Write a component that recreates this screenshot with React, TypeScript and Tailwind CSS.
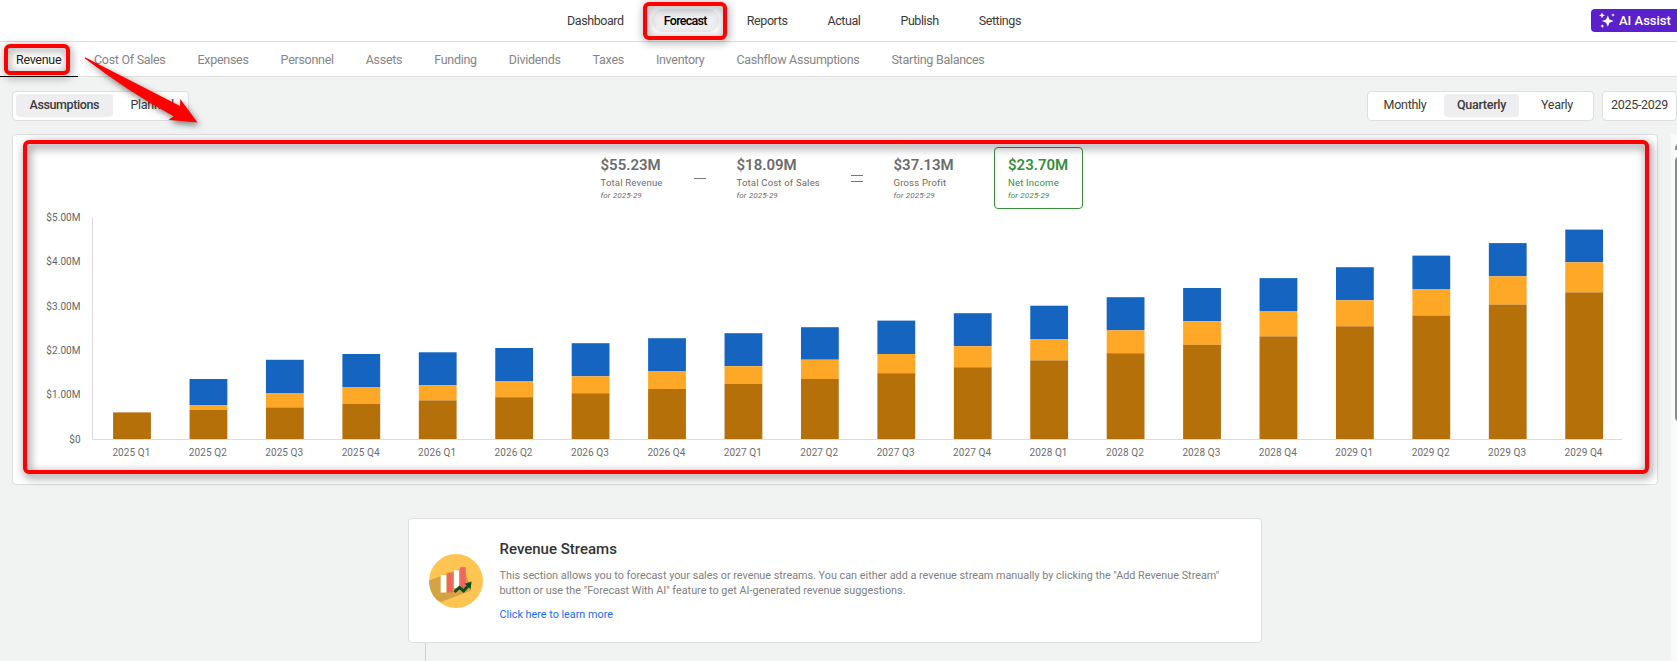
import React, { useState } from 'react';
import clsx from 'clsx';

const mainNav = ['Dashboard', 'Forecast', 'Reports', 'Actual', 'Publish', 'Settings'];

const subNav = [
  'Revenue',
  'Cost Of Sales',
  'Expenses',
  'Personnel',
  'Assets',
  'Funding',
  'Dividends',
  'Taxes',
  'Inventory',
  'Cashflow Assumptions',
  'Starting Balances',
];

interface Bar {
  label: string;
  total: number;
  mid: number;
  base: number;
}

// heights in chart units, measured up from the x axis
const bars: Bar[] = [
  { label: '2025 Q1', total: 26.6, mid: 26.6, base: 26.6 },
  { label: '2025 Q2', total: 60, mid: 33.6, base: 29.2 },
  { label: '2025 Q3', total: 79.2, mid: 46, base: 31.6 },
  { label: '2025 Q4', total: 85, mid: 52, base: 35 },
  { label: '2026 Q1', total: 86.7, mid: 53.6, base: 38.6 },
  { label: '2026 Q2', total: 91, mid: 58, base: 41.8 },
  { label: '2026 Q3', total: 95.8, mid: 62.7, base: 45.8 },
  { label: '2026 Q4', total: 100.8, mid: 68, base: 50 },
  { label: '2027 Q1', total: 105.8, mid: 72.8, base: 55 },
  { label: '2027 Q2', total: 111.8, mid: 79.3, base: 60 },
  { label: '2027 Q3', total: 118.4, mid: 85, base: 65.8 },
  { label: '2027 Q4', total: 125.8, mid: 92.8, base: 71.7 },
  { label: '2028 Q1', total: 133.3, mid: 100, base: 78.6 },
  { label: '2028 Q2', total: 141.8, mid: 108.7, base: 85.8 },
  { label: '2028 Q3', total: 151, mid: 117.8, base: 94.2 },
  { label: '2028 Q4', total: 160.9, mid: 128, base: 102.6 },
  { label: '2029 Q1', total: 171.8, mid: 138.7, base: 112.7 },
  { label: '2029 Q2', total: 183.4, mid: 150, base: 123.5 },
  { label: '2029 Q3', total: 195.9, mid: 162.7, base: 134.4 },
  { label: '2029 Q4', total: 209.4, mid: 176.7, base: 146.6 },
];

const yTicks = ['$0', '$1.00M', '$2.00M', '$3.00M', '$4.00M', '$5.00M'];

const BASELINE = 230;
const STEP = 76.43;

function RevenueChart() {
  return (
    <svg width="1644" height="275" viewBox="0 0 1644 275" className="block text-[10px] tracking-[0.08px]">
      {yTicks.map((tick, i) => (
        <text key={tick} x="67.6" y={BASELINE + 3.6 - i * 44.3} textAnchor="end" fill="#666">
          {tick}
        </text>
      ))}
      <path d="M79.5 8.5V230.5H1609" fill="none" stroke="#dcdcdc" />
      {bars.map((bar, i) => {
        const x = 100.1 + i * STEP;
        return (
          <g key={bar.label}>
            <rect x={x} y={BASELINE - bar.total} width="37.8" height={bar.total - bar.mid} fill="#1565c0" />
            <rect x={x} y={BASELINE - bar.mid} width="37.8" height={bar.mid - bar.base} fill="#ffa726" />
            <rect x={x} y={BASELINE - bar.base} width="37.8" height={bar.base} fill="#b57009" />
            <text x={x + 18.3} y="247" textAnchor="middle" fill="#6c6c6c">
              {bar.label}
            </text>
          </g>
        );
      })}
    </svg>
  );
}

function Metric({ value, label }: { value: string; label: string }) {
  return (
    <div>
      <p className="text-[15px] leading-[18px] font-semibold">{value}</p>
      <p className="text-[9.5px] leading-[12px] mt-[3px] tracking-[0.2px] whitespace-nowrap">{label}</p>
      <p className="text-[8px] leading-[10px] mt-[2px] italic tracking-[0.12px]">for 2025-29</p>
    </div>
  );
}

function SparkleIcon() {
  return (
    <svg width="16" height="17" viewBox="0 0 16 17" fill="#fff">
      <path d="M8.8 3.4 10.5 7.4 14.6 9.1 10.5 10.8 8.8 14.8 7.1 10.8 3 9.1 7.1 7.4Z" />
      <path d="M3 0.4 3.9 2.4 6 3.3 3.9 4.2 3 6.2 2.1 4.2 0.1 3.3 2.1 2.4Z" />
      <path d="M14 1.2 14.6 2.4 15.8 3 14.6 3.6 14 4.8 13.4 3.6 12.2 3 13.4 2.4Z" />
      <path d="M3.3 12.2 3.9 13.5 5.2 14.1 3.9 14.7 3.3 16 2.7 14.7 1.4 14.1 2.7 13.5Z" />
    </svg>
  );
}

function RevenueIcon() {
  return (
    <svg width="54" height="54" viewBox="0 0 54 54">
      <defs>
        <clipPath id="disc">
          <circle cx="27" cy="27" r="27" />
        </clipPath>
      </defs>
      <circle cx="27" cy="27" r="27" fill="#ffc552" />
      <path d="M0 26.5 35 13.3 42.5 36.5 12 48 0 42Z" fill="#d4a444" clipPath="url(#disc)" />
      <path d="M11.7 21H17.3V38.5H11.7ZM25 16.3H30V34H25Z" fill="#fff" />
      <path d="M18.2 18.8H23.7V38.5H18.2ZM31.2 13.3H36.7V34H31.2Z" fill="#f2645f" />
      <path d="M25.5 38 30.4 33.4 34.6 37 39.5 31.5" fill="none" stroke="#0b4f1d" strokeWidth="3" />
      <path d="M35.8 29.8 42.6 27.5 41.6 35Z" fill="#0b4f1d" />
    </svg>
  );
}

export default function App() {
  const [view, setView] = useState('Assumptions');
  const [period, setPeriod] = useState('Quarterly');

  return (
    <div className="relative h-[661px] overflow-hidden bg-[#f1f3f3] font-['Roboto',sans-serif] text-[12.5px] tracking-[-0.29px] text-[#3a3a3a]">
      <header className="flex h-[42px] items-center border-b border-[#dedede] bg-white pl-[547px]">
        {mainNav.map((item) => (
          <a
            key={item}
            className={clsx(
              'mx-2 flex h-[23px] items-center rounded-full px-3 pt-px',
              item === 'Forecast' ? 'bg-[#eeeef0] font-medium text-black tracking-[-0.7px]' : 'tracking-[-0.42px]'
            )}
          >
            {item}
          </a>
        ))}
        <button className="-mt-px ml-auto flex h-[23px] w-[86px] items-center gap-[4px] rounded-l bg-[#5a20cb] pl-[8px] text-[13px] font-medium tracking-[0px] whitespace-nowrap text-white">
          <SparkleIcon />
          <span className="pt-px">AI Assist</span>
        </button>
      </header>

      <nav className="flex h-[35px] border-b border-[#dedede] bg-white">
        {subNav.map((item) => (
          <a
            key={item}
            className={clsx(
              'flex h-[35px] shrink-0 items-center pt-[2px] pl-4 whitespace-nowrap',
              item === 'Revenue' ? 'w-[78px] border-b border-black text-[#222]' : 'pr-4 text-[#858585]'
            )}
          >
            {item}
          </a>
        ))}
      </nav>

      <div className="mt-[14px] flex h-[30px] pl-3">
        <div className="flex w-[177px] items-start rounded border border-[#dedede] bg-white p-[3px] pt-[2px]">
          {['Assumptions', 'Planned'].map((item) => (
            <button
              key={item}
              onClick={() => setView(item)}
              className={clsx(
                'h-[23px] rounded',
                view === item && 'bg-[#eeeef0] font-medium tracking-[-0.4px]',
                item === 'Planned' ? 'ml-1 px-[14px]' : 'w-[96.5px] shrink-0'
              )}
            >
              {item}
            </button>
          ))}
        </div>
        <div className="mr-[8px] ml-auto flex w-[227px] items-start rounded border border-[#dedede] bg-white p-[3px] pt-[2px]">
          {['Monthly', 'Quarterly', 'Yearly'].map((item) => (
            <button
              key={item}
              onClick={() => setPeriod(item)}
              className={clsx(
                'h-[23px] shrink-0 rounded',
                item === 'Monthly' && 'mr-[5px] w-[68px]',
                item === 'Quarterly' && 'mr-[3px] w-[75px]',
                item === 'Yearly' && 'w-[70px]',
                period === item && 'bg-[#eeeef0] font-medium'
              )}
            >
              {item}
            </button>
          ))}
        </div>
        <div className="flex w-[75px] justify-center rounded border border-[#dedede] bg-white pt-[4px]">2025-2029</div>
      </div>

      <div className="mt-[13px] flex">
        <section className="ml-3 h-[351px] w-[1646px] rounded border border-[#dedede] bg-white">
          <div className="flex h-[74px] pt-[12px] pl-[587.5px] text-[#6c6c6c] tracking-normal">
            <div className="w-[93px] pt-[9px]">
              <Metric value="$55.23M" label="Total Revenue" />
            </div>
            <div className="w-[43px] pt-[31px]">
              <div className="h-px w-[12px] bg-[#777]" />
            </div>
            <div className="w-[114.5px] pt-[9px]">
              <Metric value="$18.09M" label="Total Cost of Sales" />
            </div>
            <div className="w-[42.5px] pt-[28px]">
              <div className="h-[7px] w-[12px] border-y border-[#777]" />
            </div>
            <div className="w-[100.5px] pt-[9px]">
              <Metric value="$37.13M" label="Gross Profit" />
            </div>
            <div className="h-[62px] w-[89px] rounded border border-[#388e3c] pt-[8px] pl-[13px] text-[#388e3c]">
              <Metric value="$23.70M" label="Net Income" />
            </div>
          </div>
          <RevenueChart />
        </section>
        <div className="ml-auto h-[527px] w-[6px] bg-[#fafafa] pl-[4px]">
          <svg width="2" height="287" viewBox="0 0 2 287" fill="#8b8b8b">
            <path d="M0 13 2 10V16H0Z" />
            <path d="M2 23Q0 24 0 27V283Q0 286 2 287Z" />
          </svg>
        </div>
      </div>

      <section className="-mt-[143px] ml-[408px] flex h-[125px] w-[854px] rounded border border-[#dedede] bg-white">
        <div className="mt-[35px] ml-[20px]">
          <RevenueIcon />
        </div>
        <div className="ml-[16.5px] tracking-normal">
          <h2 className="mt-[20px] text-[15px] leading-[20px] font-medium text-[#333]">Revenue Streams</h2>
          <p className="mt-[9px] w-[740px] text-[10.82px] leading-[15px] text-[#808080]">
            This section allows you to forecast your sales or revenue streams. You can either add a revenue stream manually by
            clicking the "Add Revenue Stream"
            <br />
            button or use the "Forecast With AI" feature to get AI-generated revenue suggestions.
          </p>
          <a className="mt-[9px] block text-[10.8px] leading-[16px] text-[#1a6df0]">Click here to learn more</a>
        </div>
      </section>
      <div className="ml-[425px] h-[18px] w-px bg-[#cfcfcf]" />

      {/* callouts */}
      <div className="absolute top-[1.5px] left-[642.5px] h-[38px] w-[84px] rounded-[6px] border-4 border-[#fe0000] drop-shadow-[1px_2px_4px_rgba(0,0,0,0.5)]" />
      <div className="absolute top-[44px] left-[3.5px] h-[31px] w-[66px] rounded-[6px] border-4 border-[#fe0000] drop-shadow-[1px_2px_4px_rgba(0,0,0,0.5)]" />
      <div className="absolute top-[139.5px] left-[22.7px] h-[334.5px] w-[1626px] rounded-[6px] border-4 border-[#fe0000] drop-shadow-[2px_3px_5px_rgba(0,0,0,0.65)]" />
      <svg
        width="130"
        height="80"
        viewBox="80 50 130 80"
        className="absolute top-[50px] left-[80px] overflow-visible drop-shadow-[2px_3px_3px_rgba(0,0,0,0.5)]"
      >
        <path d="M85 57.2 180 106 180.3 99 197.5 122.5 168.5 119.8 173.7 116.2Q130 93 84.6 58.2Z" fill="#fe0000" />
      </svg>
    </div>
  );
}
